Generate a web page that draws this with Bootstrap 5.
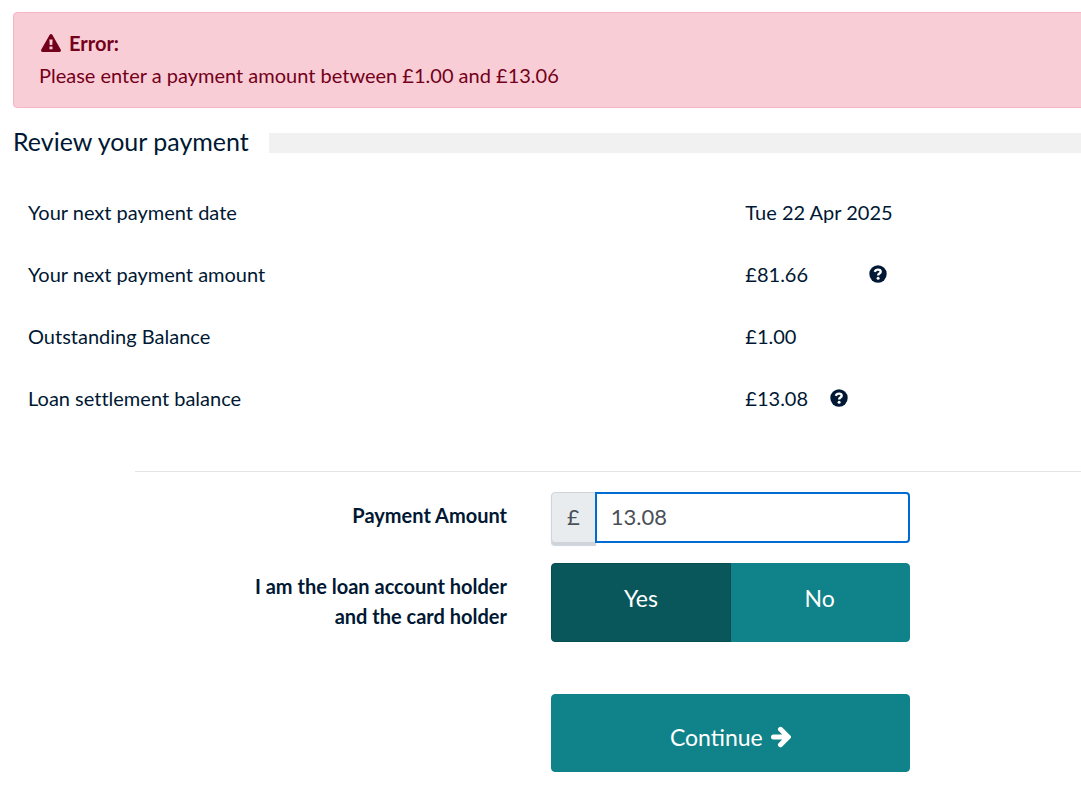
<!DOCTYPE html>
<html lang="en">
<head>
<meta charset="utf-8">
<meta name="viewport" content="width=device-width, initial-scale=1">
<title>Review your payment</title>
<link href="https://cdn.jsdelivr.net/npm/bootstrap@5.3.0/dist/css/bootstrap.min.css" rel="stylesheet">
<style>
  :root { --ink: #001833; --teal: #0f8389; --teal-dark: #0a575b; --blue: #006bd1; }
  body { font-family: Lato, "Liberation Sans", sans-serif; font-size: 20px; line-height: 30px; font-variant-ligatures: none; color: var(--ink); background: #fff; }
  .page { padding: 12px 0 12px 13px; margin-right: -8px; }
  .page-alert { color: #73001a; background: #f9cdd6; border-color: #f5b5c4; border-radius: 4px; padding: 14px 25px 16px; line-height: 32px; margin-bottom: 17px; }
  .alert-icon { width: 20px; height: 18px; margin-left: 2px; }
  .section-title { font-size: 25px; line-height: 32px; font-weight: 400; padding-bottom: 4px; }
  .title-bar { height: 20px; background: #f1f1f1; }
  .summary { padding-top: 20px; }
  .summary-row { padding: 16px 0; }
  .summary-row dt, .summary-row dd { padding: 0 0 0 15px; margin: 0; font-weight: 400; }
  .help-btn { width: 18px; height: 18px; color: var(--ink); }
  .gap-near { gap: 22px; }
  .gap-far { gap: 61px; }
  .rule { margin: 42px 0 20px 122px; color: #e3e5e7; opacity: 1; }
  .form-name { padding-right: 44px; font-weight: 700; text-align: right; }
  .name-wrap { max-width: 260px; }
  .pound { font-size: 22px; color: #495057; background: #e9ecef; border-color: #ced4da; border-radius: 4px; padding: 0 15px 3px; box-shadow: 0 3px 1px #ced4da; }
  .amount { height: 51px; font-size: 22px; color: #495057; border: 2px solid var(--blue); border-radius: 4px; padding: 0 14px 2px; }
  .amount:focus { color: #495057; border-color: var(--blue); box-shadow: none; }
  .choice, .btn-go { --bs-btn-color: #fff; --bs-btn-bg: var(--teal); --bs-btn-border-color: var(--teal); --bs-btn-hover-color: #fff; --bs-btn-hover-bg: var(--teal-dark); --bs-btn-hover-border-color: var(--teal-dark); --bs-btn-active-color: #fff; --bs-btn-active-bg: var(--teal-dark); --bs-btn-active-border-color: #084d51; --bs-btn-border-radius: 4px; font-size: 23px; line-height: 32px; }
  .choice { width: 50%; padding: 18px 12px 27px; }
  .btn-go { padding: 26px 12px 18px; margin-top: 52px; }
  .btn-go svg { width: 20px; height: 22px; }
</style>
</head>
<body>
<div class="overflow-hidden">
<main class="page">
  <div class="alert page-alert" role="alert">
    <div class="d-flex align-items-center gap-2 fw-bold">
      <svg class="alert-icon" viewBox="0 0 20 18" aria-hidden="true"><path fill="currentColor" fill-rule="evenodd" d="M8.700.8a1.500 1.500 0 0 1 2.600 0l8.400 14.800a1.500 1.500 0 0 1-1.300 2.300H1.600a1.500 1.500 0 0 1-1.300-2.300zM8.400 5.600l.3 5.400h2.600l.3-5.400zM8.500 12.500v2.700h3v-2.700z"/></svg>
      <span>Error:</span>
    </div>
    <div>Please enter a payment amount between £1.00 and £13.06</div>
  </div>

  <div class="d-flex align-items-center">
    <h1 class="section-title mb-0 me-3 pe-1">Review your payment</h1>
    <div class="title-bar flex-grow-1"></div>
  </div>

  <dl class="summary mb-0">
    <div class="row summary-row g-0">
      <dt class="col-8">Your next payment date</dt>
      <dd class="col-4">Tue 22 Apr 2025</dd>
    </div>
    <div class="row summary-row g-0">
      <dt class="col-8">Your next payment amount</dt>
      <dd class="col-4 d-flex align-items-center gap-far">£81.66
        <button type="button" class="btn help-btn p-0 border-0 d-flex" aria-label="About your next payment amount"><svg width="18" height="18" viewBox="0 0 18 18" aria-hidden="true"><circle cx="9" cy="9" r="8.700" fill="currentColor"/><path d="M5.800 6.800C6.300 5.200 7.500 4.600 9 4.600c1.600 0 2.700.9 2.700 2.200 0 1.900-2.600 1.700-2.600 3.700" fill="none" stroke="#fff" stroke-width="2.400"/><circle cx="9.100" cy="13.200" r="1.500" fill="#fff"/></svg></button>
      </dd>
    </div>
    <div class="row summary-row g-0">
      <dt class="col-8">Outstanding Balance</dt>
      <dd class="col-4">£1.00</dd>
    </div>
    <div class="row summary-row g-0">
      <dt class="col-8">Loan settlement balance</dt>
      <dd class="col-4 d-flex align-items-center gap-near">£13.08
        <button type="button" class="btn help-btn p-0 border-0 d-flex" aria-label="About loan settlement balance"><svg width="18" height="18" viewBox="0 0 18 18" aria-hidden="true"><circle cx="9" cy="9" r="8.700" fill="currentColor"/><path d="M5.800 6.800C6.300 5.200 7.500 4.600 9 4.600c1.600 0 2.700.9 2.700 2.200 0 1.900-2.600 1.700-2.600 3.700" fill="none" stroke="#fff" stroke-width="2.400"/><circle cx="9.100" cy="13.200" r="1.500" fill="#fff"/></svg></button>
      </dd>
    </div>
  </dl>

  <hr class="rule">

  <form>
    <div class="row g-0 mb-3 pb-1">
      <div class="col-6 form-name pt-2"><label for="amount">Payment Amount</label></div>
      <div class="col-4">
        <div class="input-group">
          <span class="input-group-text pound">£</span>
          <input type="text" class="form-control amount" id="amount" inputmode="decimal" value="13.08">
        </div>
      </div>
    </div>
    <div class="row g-0">
      <div class="col-6 form-name pt-2 d-flex justify-content-end"><span class="name-wrap" id="holder">I am the loan account holder and the card holder</span></div>
      <div class="col-4">
        <div class="btn-group w-100" role="group" aria-labelledby="holder">
          <button type="button" class="btn choice active" aria-pressed="true">Yes</button>
          <button type="button" class="btn choice" aria-pressed="false">No</button>
        </div>
      </div>
    </div>
    <div class="row g-0">
      <div class="col-4 offset-6">
        <button type="submit" class="btn btn-go w-100 d-flex justify-content-center align-items-center gap-2">Continue
          <svg viewBox="0 0 20 22" aria-hidden="true"><path d="M2.500 11h13M9.500 3.300l7.700 7.700-7.700 7.700" fill="none" stroke="currentColor" stroke-width="5" stroke-linecap="round"/></svg>
        </button>
      </div>
    </div>
  </form>
</main>
</div>
<script src="https://cdn.jsdelivr.net/npm/bootstrap@5.3.0/dist/js/bootstrap.bundle.min.js"></script>
</body>
</html>
